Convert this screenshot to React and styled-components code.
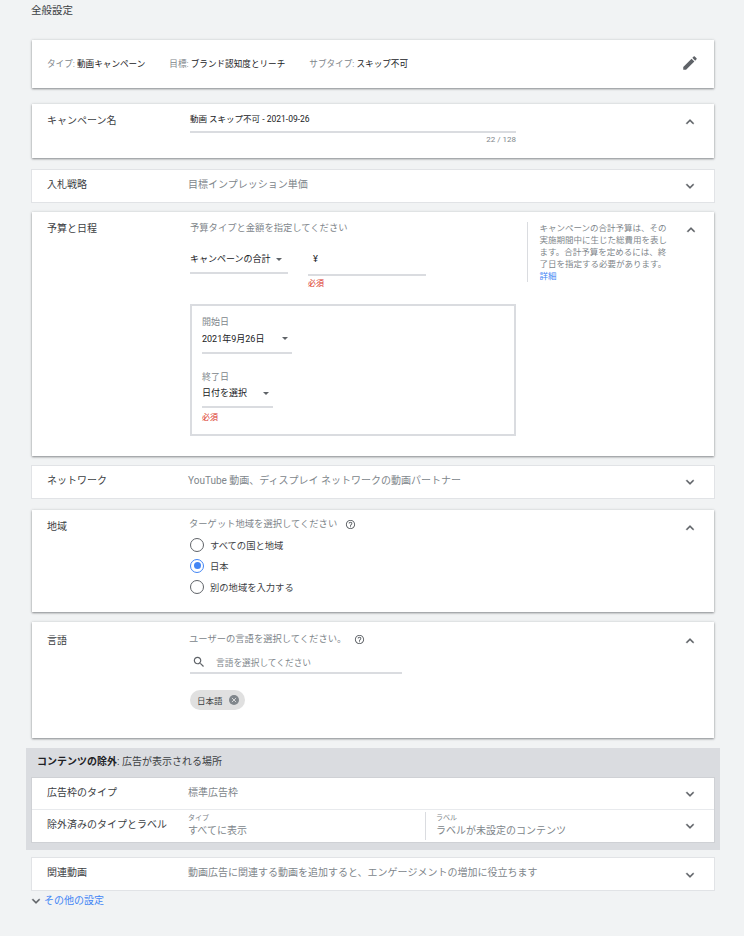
import styled, { createGlobalStyle } from 'styled-components';

const GlobalStyle = createGlobalStyle`
  * { box-sizing: border-box; }
  html, body { margin: 0; padding: 0; background: #f1f3f4; }
  body {
    font-family: Roboto, "Noto Sans CJK JP", sans-serif;
    color: #3c4043;
  }
`;

const Page = styled.div`
  width: 744px;
  height: 936px;
  overflow: hidden;
  padding: 3px 30px 0 32px;
`;

const PageTitle = styled.h2`
  margin: 0 0 21px -1px;
  font-size: 10.5px;
  font-weight: 400;
  line-height: 15px;
  height: 16px;
  color: #3c4043;
`;

const Card = styled.section`
  display: flex;
  width: 682px;
  min-height: ${p => p.$height}px;
  margin-top: ${p => p.$top || 0}px;
  padding-left: 15px;
  background: #fff;
  box-shadow: ${p =>
    p.$open
      ? '0 1px 2px rgba(60,64,67,.55), 0 0 3px rgba(60,64,67,.12)'
      : '0 0 0 1px rgba(218,220,224,.7)'};
`;

const Label = styled.div`
  flex: 0 0 141px;
  padding-top: ${p => p.$top}px;
  font-size: 10px;
  line-height: 15px;
  color: #3c4043;
`;

const Body = styled.div`
  flex: 1;
  padding-top: ${p => p.$top}px;
  min-width: 0;
`;

const Summary = styled.div`
  font-size: 10px;
  line-height: 15px;
  color: #80868b;
`;

const Hint = styled.div`
  display: flex;
  align-items: center;
  gap: 8px;
  font-size: 9.3px;
  line-height: 14px;
  color: #80868b;
  margin-left: ${p => (p.$flush ? 0 : 1)}px;
`;

const Toggle = styled.div`
  flex: 0 0 ${p => p.$width || 49}px;
  padding: ${p => p.$top}px 0 0 ${p => p.$left || 17}px;
  color: #5f6368;
  svg { display: block; }
`;

const Chevron = ({ up }) => (
  <svg width="16" height="16" viewBox="0 0 24 24" fill="currentColor" stroke="currentColor" strokeWidth="0.4">
    {up ? (
      <path d="M7.41 15.41L12 10.83l4.59 4.58L18 14l-6-6-6 6z" />
    ) : (
      <path d="M7.41 8.59L12 13.17l4.59-4.58L18 10l-6 6-6-6z" />
    )}
  </svg>
);

const HelpIcon = () => (
  <svg width="11" height="11" viewBox="0 0 24 24" fill="#5f6368">
    <path d="M11 18h2v-2h-2v2zm1-16C6.48 2 2 6.48 2 12s4.48 10 10 10 10-4.48 10-10S17.52 2 12 2zm0 18c-4.41 0-8-3.59-8-8s3.59-8 8-8 8 3.59 8 8-3.59 8-8 8zm0-14c-2.21 0-4 1.79-4 4h2c0-1.1.9-2 2-2s2 .9 2 2c0 2-3 1.75-3 5h2c0-2.25 3-2.5 3-5 0-2.21-1.79-4-4-4z" />
  </svg>
);

const MetaRow = styled.div`
  flex: 1;
  display: flex;
  align-items: center;
  padding-bottom: 3px;
  font-size: 8.6px;
  color: #202124;
`;

const MetaItem = styled.span`
  margin-right: ${p => p.$gap || 0}px;
  em { font-style: normal; color: #80868b; }
`;

const EditButton = styled.div`
  flex: 0 0 33px;
  padding-top: 14px;
  color: #5f6368;
  svg { display: block; }
`;

const NameText = styled.div`
  font-size: 8.5px;
  line-height: 12px;
  color: #202124;
  margin-left: 2px;
`;

const NameLine = styled.div`
  width: 326px;
  height: 2px;
  margin: 6px 0 0 2px;
  background: #dadce0;
`;

const Counter = styled.div`
  width: 328px;
  text-align: right;
  font-size: 8px;
  line-height: 11px;
  margin-top: 1px;
  color: #80868b;
`;

const BudgetColumn = styled.div`
  flex: 0 0 339px;
  padding: 9px 0 20px 2px;
`;

const BudgetRow = styled.div`
  display: flex;
  gap: 20px;
  margin-top: 17px;
`;

const Field = styled.div`
  width: ${p => p.$width}px;
`;

const FieldValue = styled.div`
  display: flex;
  align-items: center;
  justify-content: space-between;
  height: ${p => p.$height || 14}px;
  padding-right: ${p => p.$pad || 0}px;
  font-size: 9px;
  line-height: 14px;
  color: #202124;
`;

const FieldLine = styled.div`
  height: 2px;
  margin-top: ${p => p.$top}px;
  background: #dadce0;
`;

const Caret = styled.span`
  width: 0;
  height: 0;
  border-left: 3.5px solid transparent;
  border-right: 3.5px solid transparent;
  border-top: 3.5px solid #5f6368;
`;

const ErrorText = styled.div`
  font-size: 8px;
  line-height: 11px;
  margin-top: ${p => p.$top}px;
  color: #d93025;
`;

const Yen = styled.div`
  font-size: 9.3px;
  line-height: 14px;
  padding-left: 5px;
  color: #202124;
`;

const DateBox = styled.div`
  width: 326px;
  height: 132px;
  margin-top: 15px;
  padding: 9px 10px 0;
  border: 2px solid #dadce0;
`;

const DateLabel = styled.div`
  font-size: 9px;
  line-height: 14px;
  margin-top: ${p => p.$top || 0}px;
  color: #80868b;
`;

const HelpAside = styled.aside`
  flex: 0 0 143px;
  align-self: flex-start;
  height: 60px;
  margin-top: 10px;
  padding-left: 11.5px;
  border-left: 1.5px solid #dadce0;
  font-size: 8.5px;
  line-height: 12px;
  color: #80868b;
  a { color: #4285f4; text-decoration: none; display: block; }
`;

const RadioList = styled.div`
  margin: 3px 0 0 2px;
`;

const RadioRow = styled.div`
  display: flex;
  align-items: center;
  gap: 6px;
  height: 21px;
  font-size: 9.3px;
  color: #3c4043;
`;

const RadioDot = styled.span`
  flex: none;
  display: flex;
  align-items: center;
  justify-content: center;
  width: 14px;
  height: 14px;
  border-radius: 50%;
  border: 1.5px solid ${p => (p.$on ? '#4285f4' : '#5f6368')};
  &::after {
    content: '';
    display: ${p => (p.$on ? 'block' : 'none')};
    width: 7px;
    height: 7px;
    border-radius: 50%;
    background: #4285f4;
  }
`;

const SearchBox = styled.div`
  display: flex;
  align-items: center;
  gap: 10px;
  width: 212px;
  height: 22px;
  margin: 6px 0 0 2px;
  padding-left: 2px;
  border-bottom: 2px solid #dadce0;
  font-size: 8.7px;
  color: #80868b;
`;

const Chip = styled.div`
  display: inline-flex;
  align-items: center;
  gap: 6px;
  height: 20px;
  margin: 16px 0 0 2px;
  padding: 0 6px 0 7px;
  border-radius: 10px;
  background: #e0e0e0;
  font-size: 8.5px;
  color: #3c4043;
`;

const ChipClose = styled.span`
  display: flex;
  align-items: center;
  justify-content: center;
  width: 10px;
  height: 10px;
  border-radius: 50%;
  background: #80868b;
  color: #e0e0e0;
  svg { display: block; }
`;

const ExclusionPanel = styled.div`
  width: 694px;
  height: 102px;
  margin: 10px 0 8px -6px;
  padding: 0 6px;
  background: #dadce0;
`;

const ExclusionTitle = styled.div`
  height: 30px;
  padding-left: 5px;
  font-size: 10px;
  line-height: 28px;
  color: #3c4043;
  b { color: #202124; font-weight: 700; }
`;

const ExclusionCard = styled.div`
  background: #fff;
  box-shadow: 0 0 0 1px #cfd1d5;
`;

const ExclusionRow = styled.div`
  display: flex;
  height: ${p => p.$height}px;
  padding-left: 15px;
  & + & { border-top: 1px solid #e8eaed; }
`;

const SplitCols = styled.div`
  display: flex;
  flex: 1;
  height: 28px;
  margin-top: 2px;
`;

const SplitCol = styled.div`
  flex: 0 0 ${p => p.$width || 237}px;
  padding-top: 1px;
  ${p => p.$divider && 'border-left: 1.5px solid #dadce0; padding-left: 10px;'}
`;

const TinyLabel = styled.div`
  font-size: 7px;
  line-height: 10px;
  color: #80868b;
`;

const MoreLink = styled.div`
  display: flex;
  align-items: center;
  height: 16px;
  margin: 1px 0 0 -4px;
  font-size: 10px;
  color: #4285f4;
  svg { display: block; margin-top: 4px; color: #5f6368; }
`;

export default function App() {
  return (
    <Page>
      <GlobalStyle />
      <PageTitle>全般設定</PageTitle>

      <Card $open $height={48}>
        <MetaRow>
          <MetaItem $gap={24}><em>タイプ: </em>動画キャンペーン</MetaItem>
          <MetaItem $gap={24}><em>目標: </em>ブランド認知度とリーチ</MetaItem>
          <MetaItem><em>サブタイプ: </em>スキップ不可</MetaItem>
        </MetaRow>
        <EditButton>
          <svg width="18" height="18" viewBox="0 0 24 24" fill="currentColor">
            <path d="M3 17.25V21h3.75L17.81 9.94l-3.75-3.75L3 17.25zM20.71 7.04c.39-.39.39-1.02 0-1.41l-2.34-2.34c-.39-.39-1.02-.39-1.41 0l-1.83 1.83 3.75 3.75 1.83-1.83z" />
          </svg>
        </EditButton>
      </Card>

      <Card $open $height={54} $top={16}>
        <Label $top={9}>キャンペーン名</Label>
        <Body $top={9}>
          <NameText>動画 スキップ不可 - 2021-09-26</NameText>
          <NameLine />
          <Counter>22 / 128</Counter>
        </Body>
        <Toggle $top={10}><Chevron up /></Toggle>
      </Card>

      <Card $height={32} $top={12}>
        <Label $top={7}>入札戦略</Label>
        <Body $top={7}><Summary>目標インプレッション単価</Summary></Body>
        <Toggle $top={8}><Chevron /></Toggle>
      </Card>

      <Card $open $height={244} $top={10}>
        <Label $top={9}>予算と日程</Label>
        <BudgetColumn>
          <Hint $flush>予算タイプと金額を指定してください</Hint>
          <BudgetRow>
            <Field $width={98}>
              <FieldValue $pad={6}>キャンペーンの合計 <Caret /></FieldValue>
              <FieldLine $top={6} />
            </Field>
            <Field $width={118}>
              <Yen>¥</Yen>
              <FieldLine $top={8} />
              <ErrorText $top={2}>必須</ErrorText>
            </Field>
          </BudgetRow>
          <DateBox>
            <DateLabel>開始日</DateLabel>
            <Field $width={90}>
              <FieldValue $height={19} $pad={4}>2021年9月26日 <Caret /></FieldValue>
              <FieldLine $top={4} />
            </Field>
            <DateLabel $top={16}>終了日</DateLabel>
            <Field $width={71}>
              <FieldValue $height={18} $pad={4}>日付を選択 <Caret /></FieldValue>
              <FieldLine $top={4} />
              <ErrorText $top={4}>必須</ErrorText>
            </Field>
          </DateBox>
        </BudgetColumn>
        <HelpAside>
          キャンペーンの合計予算は、その実施期間中に生じた総費用を表します。合計予算を定めるには、終了日を指定する必要があります。
          <a href="#more">詳細</a>
        </HelpAside>
        <Toggle $top={10} $width={44} $left={13}><Chevron up /></Toggle>
      </Card>

      <Card $height={32} $top={10}>
        <Label $top={7}>ネットワーク</Label>
        <Body $top={7}><Summary>YouTube 動画、ディスプレイ ネットワークの動画パートナー</Summary></Body>
        <Toggle $top={8}><Chevron /></Toggle>
      </Card>

      <Card $open $height={102} $top={12}>
        <Label $top={9}>地域</Label>
        <Body $top={7}>
          <Hint>ターゲット地域を選択してください <HelpIcon /></Hint>
          <RadioList>
            <RadioRow><RadioDot />すべての国と地域</RadioRow>
            <RadioRow><RadioDot $on />日本</RadioRow>
            <RadioRow><RadioDot />別の地域を入力する</RadioRow>
          </RadioList>
        </Body>
        <Toggle $top={10}><Chevron up /></Toggle>
      </Card>

      <Card $open $height={116} $top={10}>
        <Label $top={11}>言語</Label>
        <Body $top={10}>
          <Hint>ユーザーの言語を選択してください。 <HelpIcon /></Hint>
          <SearchBox>
            <svg width="14" height="14" viewBox="0 0 24 24" fill="#5f6368">
              <path d="M15.5 14h-.79l-.28-.27C15.41 12.59 16 11.11 16 9.5 16 5.91 13.09 3 9.5 3S3 5.91 3 9.5 5.91 16 9.5 16c1.61 0 3.09-.59 4.23-1.57l.27.28v.79l5 4.99L20.49 19l-4.99-5zm-6 0C7.01 14 5 11.99 5 9.5S7.01 5 9.5 5 14 7.01 14 9.5 11.99 14 9.5 14z" />
            </svg>
            言語を選択してください
          </SearchBox>
          <Chip>
            日本語
            <ChipClose>
              <svg width="6" height="6" viewBox="0 0 10 10" stroke="currentColor" strokeWidth="1.5">
                <path d="M1.5 1.5l7 7M8.5 1.5l-7 7" />
              </svg>
            </ChipClose>
          </Chip>
        </Body>
        <Toggle $top={11}><Chevron up /></Toggle>
      </Card>

      <ExclusionPanel>
        <ExclusionTitle><b>コンテンツの除外</b>: 広告が表示される場所</ExclusionTitle>
        <ExclusionCard>
          <ExclusionRow $height={31}>
            <Label $top={7}>広告枠のタイプ</Label>
            <Body $top={7}><Summary>標準広告枠</Summary></Body>
            <Toggle $top={8}><Chevron /></Toggle>
          </ExclusionRow>
          <ExclusionRow $height={33}>
            <Label $top={7}>除外済みのタイプとラベル</Label>
            <SplitCols>
              <SplitCol>
                <TinyLabel>タイプ</TinyLabel>
                <Summary>すべてに表示</Summary>
              </SplitCol>
              <SplitCol $divider>
                <TinyLabel>ラベル</TinyLabel>
                <Summary>ラベルが未設定のコンテンツ</Summary>
              </SplitCol>
            </SplitCols>
            <Toggle $top={8}><Chevron /></Toggle>
          </ExclusionRow>
        </ExclusionCard>
      </ExclusionPanel>

      <Card $height={32}>
        <Label $top={7}>関連動画</Label>
        <Body $top={7}><Summary>動画広告に関連する動画を追加すると、エンゲージメントの増加に役立ちます</Summary></Body>
        <Toggle $top={9}><Chevron /></Toggle>
      </Card>

      <MoreLink>
        <Chevron />
        その他の設定
      </MoreLink>
    </Page>
  );
}
